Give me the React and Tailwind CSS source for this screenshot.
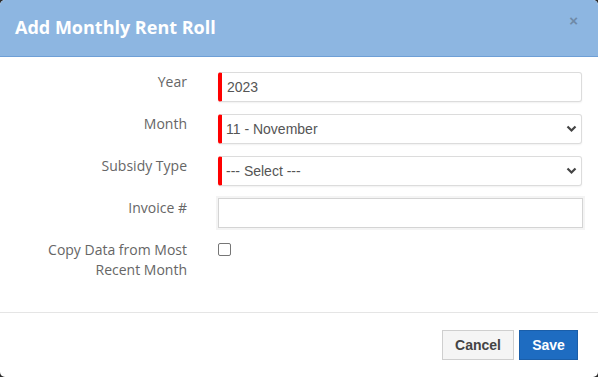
import { useState } from 'react';

const labelCls = "w-[172px] text-right text-[14px] leading-5 text-[#666] font-['Open_Sans',sans-serif]";
const fieldFont = "font-['Liberation_Sans',Arial,sans-serif] text-[14px] text-[#555]";

const Chevron = () => (
    <svg className="pointer-events-none absolute right-[5px] top-[11px]" width="11" height="8" viewBox="0 0 11 8">
        <path d="M1.5 1.5 L5.5 5.5 L9.5 1.5" fill="none" stroke="#444" strokeWidth="2.2" />
    </svg>
);

const RequiredSelect = ({ value, options }) => (
    <div className="relative h-[30px] w-[364px]">
        <select
            defaultValue={value}
            className={`h-full w-full appearance-none rounded-[3px] border border-[#dcdcdc] border-l-4 border-l-[#ff0000] bg-white pl-[4px] shadow-[0_1px_2px_rgba(0,0,0,0.06)] outline-none ${fieldFont}`}
        >
            {options.map(o => <option key={o}>{o}</option>)}
        </select>
        <Chevron />
    </div>
);

const App = () => {
    const [copyData, setCopyData] = useState(false);

    return (
        <div className="h-[377px] w-[598px] bg-[#2b2b2b]">
            <div className="flex h-full w-full flex-col overflow-hidden rounded-[5px] bg-white">
                <div className="flex h-[57px] shrink-0 items-center justify-between border-b border-[#6e9fd6] bg-[#8db6e1] pl-[15px] pr-[20px]">
                    <h4 className="text-[18px] font-bold text-white font-['Open_Sans',sans-serif] -mt-[1px]">Add Monthly Rent Roll</h4>
                    <button className="-mt-[16px] text-[15px] font-bold leading-none text-[#6f8aa8] font-['Liberation_Sans',Arial,sans-serif]">×</button>
                </div>

                <div className="flex h-[256px] shrink-0 flex-col gap-3 border-b border-[#e5e5e5] pl-[15px] pt-[15px]">
                    <div className="flex gap-[31px]">
                        <label className={labelCls}>Year</label>
                        <input
                            defaultValue="2023"
                            className={`h-[30px] w-[364px] rounded-[3px] border border-[#dcdcdc] border-l-4 border-l-[#ff0000] bg-white pl-[5px] shadow-[0_1px_2px_rgba(0,0,0,0.06)] outline-none ${fieldFont}`}
                        />
                    </div>
                    <div className="flex gap-[31px]">
                        <label className={labelCls}>Month</label>
                        <RequiredSelect value="11 - November" options={['10 - October', '11 - November', '12 - December']} />
                    </div>
                    <div className="flex gap-[31px]">
                        <label className={labelCls}>Subsidy Type</label>
                        <RequiredSelect value="--- Select ---" options={['--- Select ---']} />
                    </div>
                    <div className="flex gap-[31px]">
                        <label className={labelCls}>Invoice #</label>
                        <input
                            className={`h-[30px] w-[365px] border border-[#d4d4d4] bg-white px-[5px] shadow-[0_0_0_2px_#f4f4f4] outline-none ${fieldFont}`}
                        />
                    </div>
                    <div className="flex gap-[31px]">
                        <label className={labelCls}>Copy Data from Most Recent Month</label>
                        <input
                            type="checkbox"
                            checked={copyData}
                            onChange={e => setCopyData(e.target.checked)}
                            className="mt-[3px] h-[13px] w-[13px] appearance-none rounded-[2px] border border-[#767676] bg-white"
                        />
                    </div>
                </div>

                <div className="flex flex-1 items-center justify-end gap-[5px] pr-[20px]">
                    <button className="h-[30px] w-[72px] border border-[#cfcfcf] bg-[#f5f5f5] text-[14px] font-bold text-[#444] font-['Liberation_Sans',Arial,sans-serif]">
                        Cancel
                    </button>
                    <button className="h-[30px] w-[59px] border border-[#1a5ea9] bg-[#1e6cc1] text-[14px] font-bold text-white font-['Liberation_Sans',Arial,sans-serif]">
                        Save
                    </button>
                </div>
            </div>
        </div>
    );
};

export default App;
